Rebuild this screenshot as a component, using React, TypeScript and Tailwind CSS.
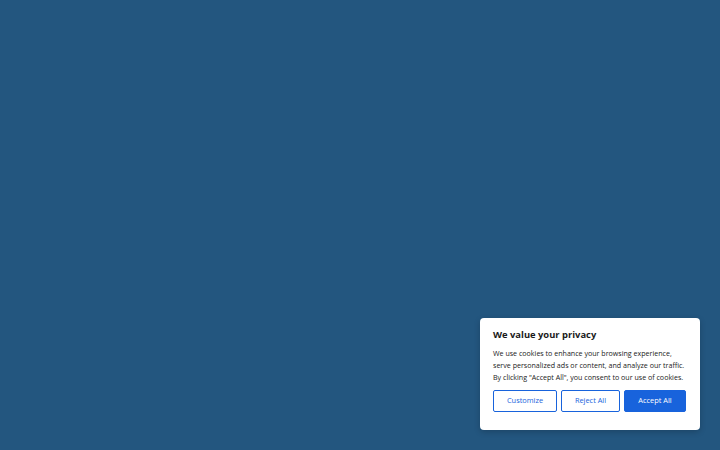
export default function App() {
  return (
    <div className="relative w-[720px] h-[450px] bg-[#23567f] overflow-hidden" style={{ fontFamily: '"Open Sans", "DejaVu Sans", sans-serif' }}>
      <div className="absolute right-[20px] bottom-[20px] w-[220px] rounded-[4px] bg-white px-[13px] pt-[11px] pb-[18px] shadow-[0_2px_6px_rgba(0,0,0,0.2)]">
        <h2 className="text-[9.4px] font-bold leading-[12px] text-[#1a1a1a]">We value your privacy</h2>
        <p className="mt-[6px] text-[7.1px] leading-[12px] text-[#212121]">
          We use cookies to enhance your browsing experience, serve personalized ads or content, and analyze our traffic. By clicking "Accept All", you consent to our use of cookies.
        </p>
        <div className="mt-[7px] flex gap-[4px]">
          <button className="flex h-[22px] w-[64px] items-center justify-center rounded-[2px] border border-[#1863dc] text-[7.4px] font-medium text-[#1863dc]">Customize</button>
          <button className="flex h-[22px] w-[59px] items-center justify-center rounded-[2px] border border-[#1863dc] text-[7.4px] font-medium text-[#1863dc]">Reject All</button>
          <button className="flex h-[22px] w-[62px] items-center justify-center rounded-[2px] border border-[#1863dc] bg-[#1863dc] text-[7.4px] font-medium text-white">Accept All</button>
        </div>
      </div>
    </div>
  );
}
